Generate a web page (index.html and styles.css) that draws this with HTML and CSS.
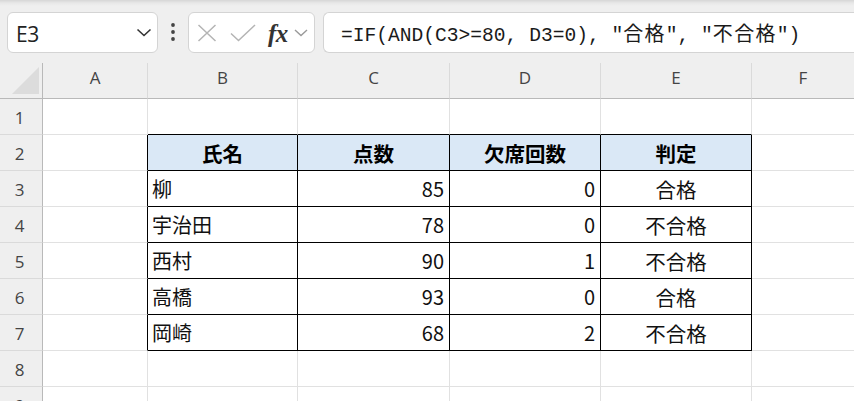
FILE: index.html
```html
<!DOCTYPE html>
<html lang="ja">
<head>
<meta charset="utf-8">
<link rel="stylesheet" href="styles.css">
</head>
<body>
<div class="toolbar">
  <div class="namebox">
    <span class="ref">E3</span>
    <svg class="chev" width="16" height="9" viewBox="0 0 16 9"><polyline points="1.5,1.5 8,7.5 14.5,1.5" fill="none" stroke="#333" stroke-width="1.6"/></svg>
  </div>
  <svg class="dots" width="6" height="20" viewBox="0 0 6 20"><circle cx="3" cy="3" r="1.9" fill="#444"/><circle cx="3" cy="10" r="1.9" fill="#444"/><circle cx="3" cy="17" r="1.9" fill="#444"/></svg>
  <div class="fxbox">
    <svg class="ic-x" width="20" height="18" viewBox="0 0 20 18"><path d="M1.5 1 L18.5 17 M18.5 1 L1.5 17" stroke="#b4b4b4" stroke-width="1.5" fill="none"/></svg>
    <svg class="ic-ok" width="26" height="18" viewBox="0 0 26 18"><polyline points="1,9.5 8.5,16.5 25,1" stroke="#b4b4b4" stroke-width="1.5" fill="none"/></svg>
    <span class="fx">fx</span>
    <svg class="chev-s" width="14" height="8" viewBox="0 0 14 8"><polyline points="1,1 7,6.5 13,1" fill="none" stroke="#9a9a9a" stroke-width="1.4"/></svg>
  </div>
  <div class="formula">=IF(AND(C3&gt;=80, D3=0), "<span class="cj">合格</span>", "<span class="cj">不合格</span>")</div>
</div>

<div class="sheet">
  <div class="corner"><div class="tri"></div></div>
  <div class="ch">A</div><div class="ch">B</div><div class="ch">C</div><div class="ch">D</div><div class="ch">E</div><div class="ch last">F</div>

  <div class="rh">1</div>
  <div class="c"></div><div class="c tb"></div><div class="c tb"></div><div class="c tb"></div><div class="c tb"></div><div class="c last"></div>

  <div class="rh">2</div>
  <div class="c tl"></div><div class="c t hd">氏名</div><div class="c t hd">点数</div><div class="c t hd">欠席回数</div><div class="c t hd">判定</div><div class="c last"></div>

  <div class="rh">3</div>
  <div class="c tl"></div><div class="c t l">柳</div><div class="c t r">85</div><div class="c t r">0</div><div class="c t m">合格</div><div class="c last"></div>

  <div class="rh">4</div>
  <div class="c tl"></div><div class="c t l">宇治田</div><div class="c t r">78</div><div class="c t r">0</div><div class="c t m">不合格</div><div class="c last"></div>

  <div class="rh">5</div>
  <div class="c tl"></div><div class="c t l">西村</div><div class="c t r">90</div><div class="c t r">1</div><div class="c t m">不合格</div><div class="c last"></div>

  <div class="rh">6</div>
  <div class="c tl"></div><div class="c t l">高橋</div><div class="c t r">93</div><div class="c t r">0</div><div class="c t m">合格</div><div class="c last"></div>

  <div class="rh">7</div>
  <div class="c tl"></div><div class="c t l">岡崎</div><div class="c t r">68</div><div class="c t r">2</div><div class="c t m">不合格</div><div class="c last"></div>

  <div class="rh">8</div>
  <div class="c"></div><div class="c"></div><div class="c"></div><div class="c"></div><div class="c"></div><div class="c last"></div>

  <div class="rh">9</div>
  <div class="c"></div><div class="c"></div><div class="c"></div><div class="c"></div><div class="c"></div><div class="c last"></div>
</div>
</body>
</html>
```

FILE: styles.css
```css
* { box-sizing: border-box; }
html, body {
  margin: 0;
  padding: 0;
  width: 854px;
  height: 401px;
  overflow: hidden;
  background: #ffffff;
  font-family: "Noto Sans CJK JP", "Noto Sans", sans-serif;
}

.toolbar {
  height: 63px;
  display: flex;
  align-items: flex-start;
  padding-top: 12px;
  background: linear-gradient(to bottom, #d6d6d6 0px, #e8e8e8 3px, #efefef 6px, #efefef 100%);
  white-space: nowrap;
}

.namebox {
  margin-left: 7px;
  width: 151px;
  height: 41px;
  background: #fff;
  border: 1px solid #d4d4d4;
  border-radius: 6px;
  display: flex;
  align-items: center;
  padding-left: 8px;
  padding-right: 5px;
}
.ref {
  font-family: "Open Sans", "Liberation Sans", sans-serif;
  font-size: 21px;
  color: #222;
  flex: 1;
  padding-top: 2px;
  letter-spacing: -0.3px;
}
.chev { display: block; }

.dots {
  display: block;
  margin-left: 12px;
  margin-top: 10px;
}

.fxbox {
  margin-left: 12px;
  width: 127px;
  height: 41px;
  background: #fff;
  border: 1px solid #d4d4d4;
  border-radius: 6px;
  display: flex;
  align-items: center;
  padding-left: 8px;
}
.ic-x { display: block; margin-top: 1px; }
.ic-ok { display: block; margin-left: 13px; margin-top: 1px; }
.fx {
  font-family: "Liberation Serif", "DejaVu Serif", serif;
  font-style: italic;
  font-weight: bold;
  font-size: 25px;
  color: #333;
  margin-left: 12px;
  line-height: 1;
  margin-top: 2px;
  letter-spacing: -0.5px;
}
.chev-s { display: block; margin-left: 6px; margin-top: 1px; }

.formula {
  margin-left: 8px;
  flex: 1;
  height: 41px;
  background: #fff;
  border: 1px solid #d4d4d4;
  border-right: none;
  border-radius: 6px 0 0 6px;
  padding-left: 17px;
  font-family: "Liberation Mono", "DejaVu Sans Mono", monospace;
  font-size: 19.6px;
  line-height: 39px;
  color: #1a1a1a;
}
.formula .cj {
  font-family: "Noto Sans CJK JP", sans-serif;
  font-size: 20px;
  letter-spacing: 1.3px;
}

.sheet {
  display: grid;
  grid-template-columns: 43px 105px 150px 152px 151px 151px 1fr;
  grid-template-rows: 36px repeat(9, 36px);
}

.corner {
  background: #efefef;
  border-right: 1px solid #b9b9b9;
  border-bottom: 1px solid #b9b9b9;
  position: relative;
}
.tri {
  position: absolute;
  left: 12px;
  top: 4px;
  width: 0;
  height: 0;
  border-left: 27px solid transparent;
  border-bottom: 27px solid #dcdcdc;
}

.ch {
  background: #efefef;
  border-right: 1px solid #dadada;
  border-bottom: 1px solid #b9b9b9;
  font-family: "Open Sans", "Liberation Sans", sans-serif;
  font-size: 17px;
  color: #444;
  display: flex;
  align-items: center;
  justify-content: center;
  padding-bottom: 6px;
}
.ch.last { border-right: none; }

.rh {
  background: #efefef;
  border-right: 1px solid #b9b9b9;
  border-bottom: 1px solid #dadada;
  font-family: "Open Sans", "Liberation Sans", sans-serif;
  font-size: 17px;
  color: #444;
  display: flex;
  align-items: center;
  justify-content: center;
  padding-top: 2px;
  padding-right: 3px;
}

.c {
  border-right: 1px solid #e1e1e1;
  border-bottom: 1px solid #e1e1e1;
  display: flex;
  align-items: center;
  font-size: 20px;
  color: #111;
  white-space: nowrap;
}
.c.last { border-right: none; }

.c.tb { border-bottom-color: #000; }
.c.tl { border-right-color: #000; }
.c.t {
  border-right-color: #000;
  border-bottom-color: #000;
}
.c.hd {
  background: #dae8f6;
  font-weight: bold;
  justify-content: center;
  font-size: 20.5px;
  color: #000;
}
.c.l { padding-left: 4px; }
.c.r {
  justify-content: flex-end;
  padding-right: 5px;
  font-size: 20px;
}
.c.m { justify-content: center; font-size: 20.5px; }
```
